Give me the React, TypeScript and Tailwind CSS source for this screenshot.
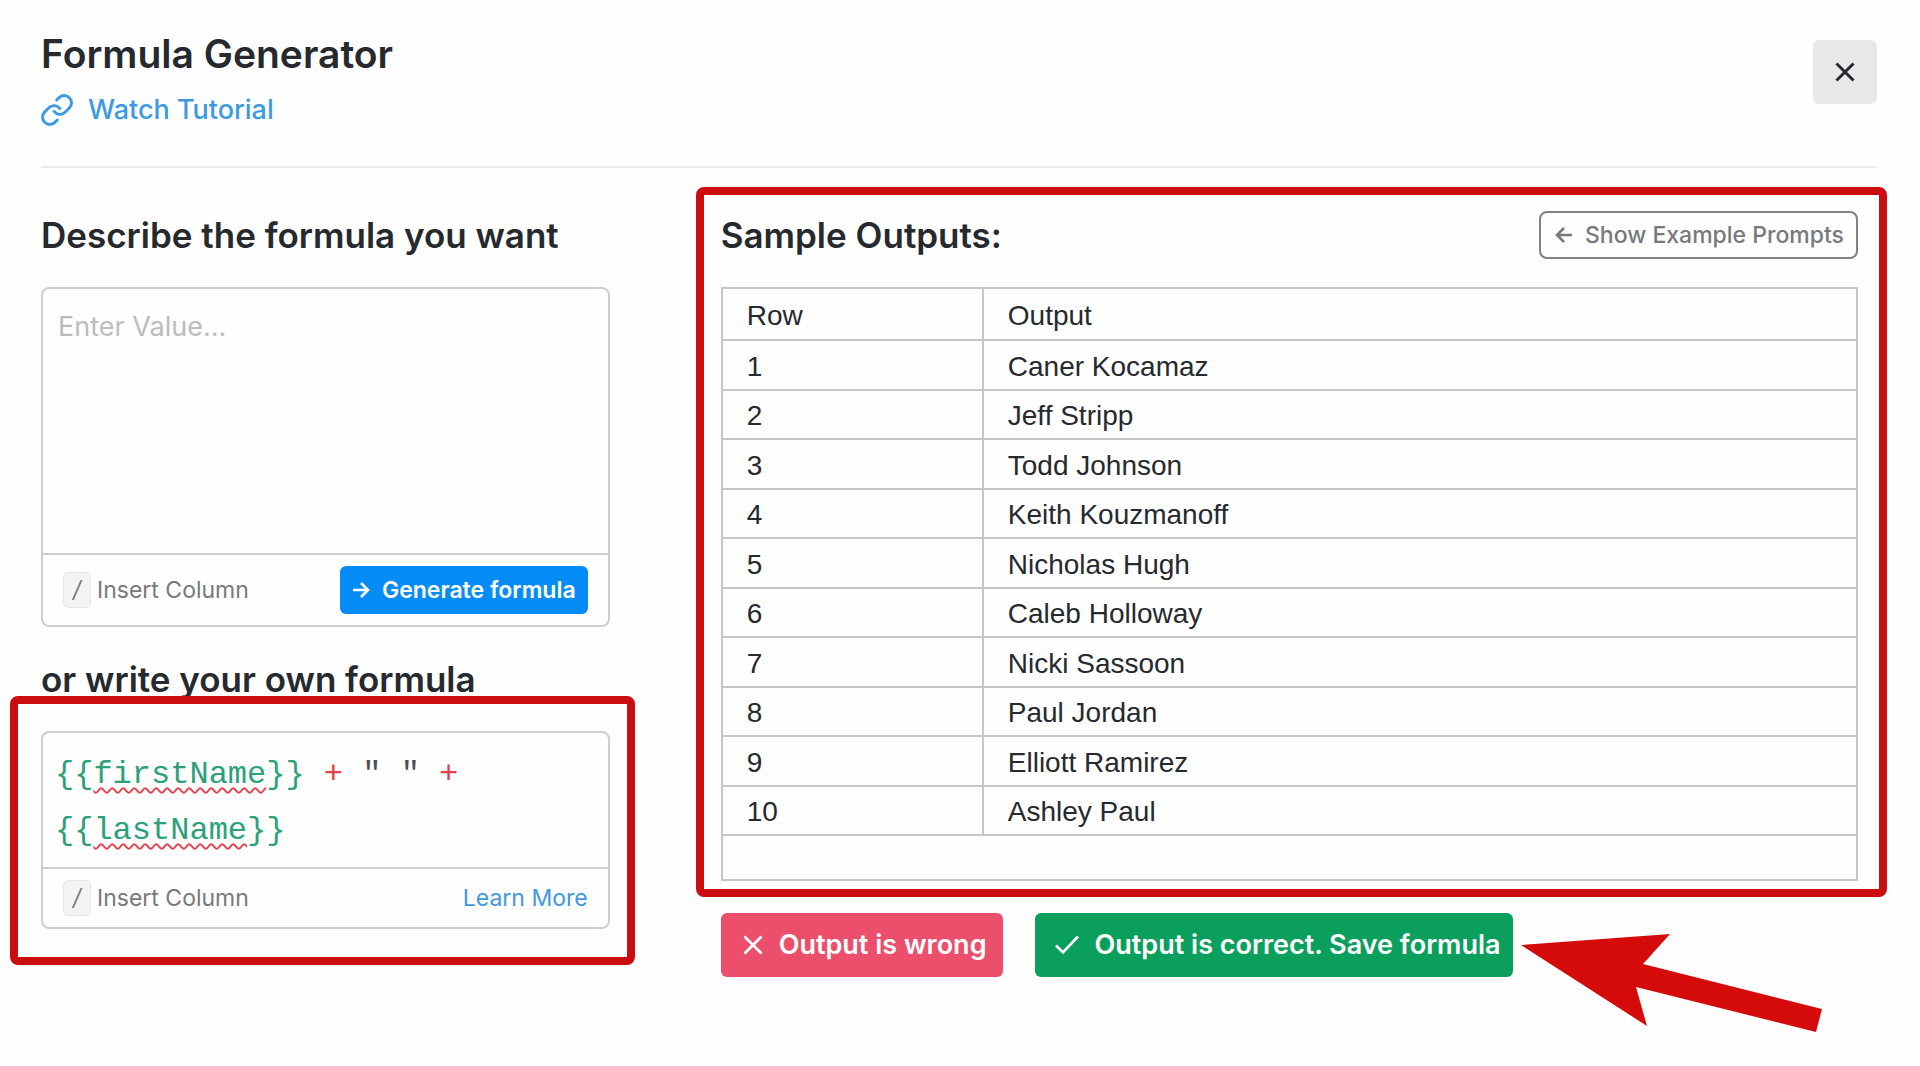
import { useState } from "react";

const rows = [
  "Caner Kocamaz",
  "Jeff Stripp",
  "Todd Johnson",
  "Keith Kouzmanoff",
  "Nicholas Hugh",
  "Caleb Holloway",
  "Nicki Sassoon",
  "Paul Jordan",
  "Elliott Ramirez",
  "Ashley Paul",
];

function LinkIcon() {
  return (
    <svg width="32" height="32" viewBox="1 1 22 22" fill="none" stroke="currentColor" strokeWidth="2" strokeLinecap="round" aria-hidden="true">
      <path d="M10 13a5 5 0 0 0 7.54.54l3-3a5 5 0 0 0-7.07-7.07l-1.72 1.71" />
      <path d="M14 11a5 5 0 0 0-7.54-.54l-3 3a5 5 0 0 0 7.07 7.07l1.71-1.71" />
    </svg>
  );
}

function ArrowIcon({ className }: { className?: string }) {
  return (
    <svg className={className} width="18" height="20" viewBox="0 0 18 20" fill="none" stroke="currentColor" strokeWidth="2.6" aria-hidden="true">
      <path d="M1 10h15M9 3l7 7-7 7" />
    </svg>
  );
}

function CrossIcon({ width }: { width: number }) {
  return (
    <svg width="20" height="20" viewBox="0 0 20 20" fill="none" stroke="currentColor" strokeWidth={width} aria-hidden="true">
      <path d="M1.500 1.500l17 17M18.500 1.500l-17 17" />
    </svg>
  );
}

function InsertColumn() {
  return (
    <button type="button" className="flex items-center gap-1.5 text-[23px] leading-9 text-[#77797d]">
      <kbd className="flex h-9 w-7 items-center justify-center rounded-[5px] border border-[#e6e6e7] bg-[#f4f4f5] font-['Inter',sans-serif] text-[23px] italic">
        /
      </kbd>
      Insert Column
    </button>
  );
}

export default function App() {
  const [prompt, setPrompt] = useState("");
  return (
    <main className="min-h-screen bg-[#fefefe] pr-[43px] pb-10 pl-[41px] font-['Inter',sans-serif] text-[#26292e]">
      <header className="flex items-start justify-between border-b-2 border-[#ebebec] pt-[30px] pb-10">
        <div>
          <h1 className="text-[39px] leading-12 font-semibold">Formula Generator</h1>
          <a href="#tutorial" className="mt-4 flex items-center gap-[15px] text-[27px] leading-8 font-medium text-[#3d9ae0]">
            <LinkIcon />
            Watch Tutorial
          </a>
        </div>
        <button type="button" aria-label="Close" className="mt-[10px] flex size-16 items-center justify-center rounded-md bg-[#e8e8ea]">
          <CrossIcon width={3} />
        </button>
      </header>

      <div className="mt-[43px] mr-[19px] grid grid-cols-[minmax(0,1fr)_minmax(0,2fr)] gap-x-[111px]">
        <section>
          <h2 className="mb-7 text-[35px] leading-12 font-semibold whitespace-nowrap">
            <label htmlFor="prompt">Describe the formula you want</label>
          </h2>
          <div className="rounded-lg border-2 border-[#cbced2]">
            <textarea
              id="prompt"
              value={prompt}
              onChange={(e) => setPrompt(e.target.value)}
              placeholder="Enter Value..."
              className="block h-[264px] w-full resize-none px-[15px] py-5 text-[27px] leading-9 outline-none placeholder:text-[#bcbcbc]"
            />
            <div className="flex items-center justify-between border-t-2 border-[#cbced2] px-5 py-[11px]">
              <InsertColumn />
              <button type="button" className="flex h-12 items-center gap-3 rounded-md bg-[#058cf7] px-3 text-[23px] font-semibold text-white">
                <ArrowIcon />
                Generate formula
              </button>
            </div>
          </div>

          <h2 id="own-formula" className="my-7 text-[35px] leading-12 font-semibold">or write your own formula</h2>
          <div className="relative rounded-lg border-2 border-[#cbced2]">
            <div
              role="textbox"
              aria-multiline="true"
              aria-labelledby="own-formula"
              contentEditable
              suppressContentEditableWarning
              spellCheck={false}
              className="px-3 pt-[14px] pb-2 font-['Liberation_Mono',monospace] text-[32px] leading-14 text-[#2aa17a] outline-none"
            >
              {"{{"}
              <span className="underline decoration-[#e0414b] decoration-wavy decoration-2 underline-offset-4">firstName</span>
              {"}} "}
              <span className="text-[#e0414b]">+</span>
              <span className="text-[#4a4d52]">{' " " '}</span>
              <span className="text-[#e0414b]">+</span> {"{{"}
              <span className="underline decoration-[#e0414b] decoration-wavy decoration-2 underline-offset-4">lastName</span>
              {"}}"}
            </div>
            <div className="flex items-center justify-between border-t-2 border-[#cbced2] px-5 py-[11px]">
              <InsertColumn />
              <a href="#learn-more" className="text-[23px] leading-9 text-[#3d9ae0]">Learn More</a>
            </div>
            <div className="pointer-events-none absolute -top-[37px] -right-[27px] -bottom-[38px] -left-[33px] rounded-lg border-8 border-[#cc0d10]" />
          </div>
        </section>

        <section>
          <div className="relative">
            <div className="mb-7 flex items-center justify-between">
              <h2 className="text-[35px] leading-12 font-semibold">Sample Outputs:</h2>
              <button type="button" className="flex h-12 items-center gap-3 rounded-lg border-2 border-[#808286] pr-3 pl-[14px] text-[23px] font-medium text-[#77797d]">
                <ArrowIcon className="rotate-180" />
                Show Example Prompts
              </button>
            </div>
            <table className="w-full border-collapse text-left font-['Liberation_Sans',Arial,sans-serif] text-[28px] leading-8">
              <thead>
                <tr className="h-[52px]">
                  <th scope="col" className="w-[23%] border-2 border-[#c6c6c6] px-6 pt-[3px] font-normal">Row</th>
                  <th scope="col" className="border-2 border-[#c6c6c6] px-6 pt-[3px] font-normal">Output</th>
                </tr>
              </thead>
              <tbody>
                {rows.map((name, i) => (
                  <tr key={name} className="h-[50px] even:h-[49px]">
                    <td className="border-2 border-[#c6c6c6] px-6 pt-[3px]">{i + 1}</td>
                    <td className="border-2 border-[#c6c6c6] px-6 pt-[3px]">{name}</td>
                  </tr>
                ))}
                <tr className="h-[45px]">
                  <td colSpan={2} className="border-2 border-[#c6c6c6]" />
                </tr>
              </tbody>
            </table>
            <div className="pointer-events-none absolute -top-6 -right-[29px] -bottom-4 -left-[25px] rounded-lg border-8 border-[#cc0d10]" />
          </div>

          <div className="mt-8 flex items-start gap-8 text-[27px] font-semibold text-white">
            <button type="button" className="flex h-16 items-center gap-4 rounded-md bg-[#ec4f6c] pr-4 pl-[22px]">
              <CrossIcon width={2.6} />
              Output is wrong
            </button>
            <div className="relative">
              <button type="button" className="flex h-16 items-center gap-4 rounded-md bg-[#0b9f5d] pr-3 pl-5">
                <svg width="24" height="20" viewBox="0 0 24 20" fill="none" stroke="currentColor" strokeWidth="2.6" aria-hidden="true">
                  <path d="M1 10.500l7 7L23 1.500" />
                </svg>
                Output is correct. Save formula
              </button>
              <svg className="absolute top-5 left-full ml-2 max-w-none" width="302" height="100" viewBox="0 0 302 100" fill="#d50b0b" aria-hidden="true">
                <path d="M0 12L149 1L122 31L301 76L295 99L115 54L126 93Z" />
              </svg>
            </div>
          </div>
        </section>
      </div>
    </main>
  );
}
